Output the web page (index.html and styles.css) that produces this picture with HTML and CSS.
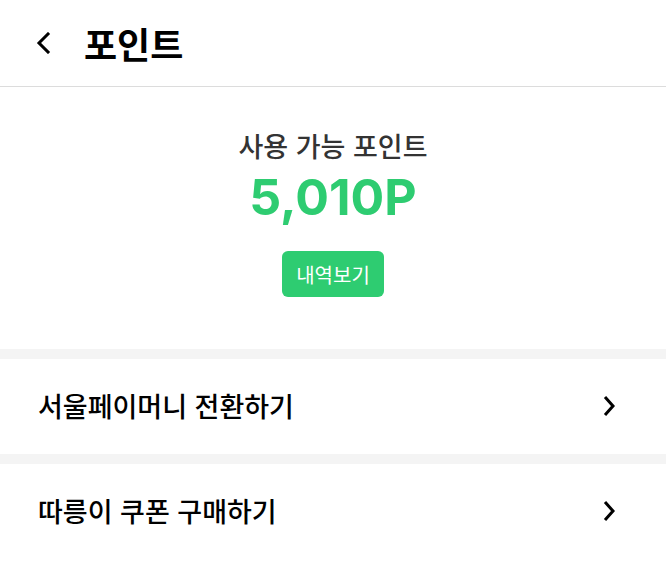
FILE: index.html
```html
<!DOCTYPE html>
<html lang="ko">
<head>
<meta charset="utf-8">
<link rel="stylesheet" href="styles.css">
</head>
<body>
<div class="page">
  <header class="topbar">
    <span class="back">
      <svg width="16" height="22" viewBox="0 0 16 22"><path d="M12 2 L3 11 L12 20" fill="none" stroke="#000" stroke-width="3" stroke-linecap="square"/></svg>
    </span>
    <h1 class="title">포인트</h1>
  </header>
  <section class="summary">
    <div class="label">사용 가능 포인트</div>
    <div class="amount">5,010P</div>
    <button class="history">내역보기</button>
  </section>
  <div class="divider"></div>
  <div class="row">
    <span class="row-text">서울페이머니 전환하기</span>
    <svg class="chev" width="14" height="22" viewBox="0 0 14 22"><path d="M3 2 L11 11 L3 20" fill="none" stroke="#000" stroke-width="3"/></svg>
  </div>
  <div class="divider"></div>
  <div class="row">
    <span class="row-text">따릉이 쿠폰 구매하기</span>
    <svg class="chev" width="14" height="22" viewBox="0 0 14 22"><path d="M3 2 L11 11 L3 20" fill="none" stroke="#000" stroke-width="3"/></svg>
  </div>
</div>
</body>
</html>
```
FILE: styles.css
```css
* { box-sizing: border-box; }
html, body { margin: 0; padding: 0; background: #fff; }
body { font-family: "Noto Sans CJK KR", "Noto Sans", sans-serif; color: #000; }
.page { width: 666px; }
.topbar {
  height: 87px;
  display: flex;
  align-items: center;
  border-bottom: 1px solid #dcdcdc;
  padding-left: 36px;
}
.back { display: flex; width: 48px; }
.title { margin: 0; font-size: 36px; font-weight: 700; line-height: 1; letter-spacing: 0; }
.summary {
  display: flex;
  flex-direction: column;
  align-items: center;
  height: 262px;
  padding-top: 40px;
}
.label { font-size: 27px; font-weight: 500; color: #333; line-height: 38px; }
.amount {
  font-family: Inter, Roboto, sans-serif;
  font-size: 50px;
  font-weight: 700;
  color: #2ecc71;
  line-height: 56px;
  margin-top: 4px;
}
.history {
  flex: none;
  margin-top: 26px;
  width: 102px;
  height: 46px;
  border: 0;
  border-radius: 6px;
  background: #2ecc71;
  color: #fff;
  font-family: "Noto Sans CJK KR", sans-serif;
  font-size: 20px;
  font-weight: 400;
  padding: 0;
}
.divider { height: 10px; background: #f4f4f4; }
.row {
  height: 95px;
  display: flex;
  align-items: center;
  justify-content: space-between;
  padding: 0 50px 2px 38px;
}
.row-text { font-size: 27px; font-weight: 500; }
.chev { display: block; }
```
